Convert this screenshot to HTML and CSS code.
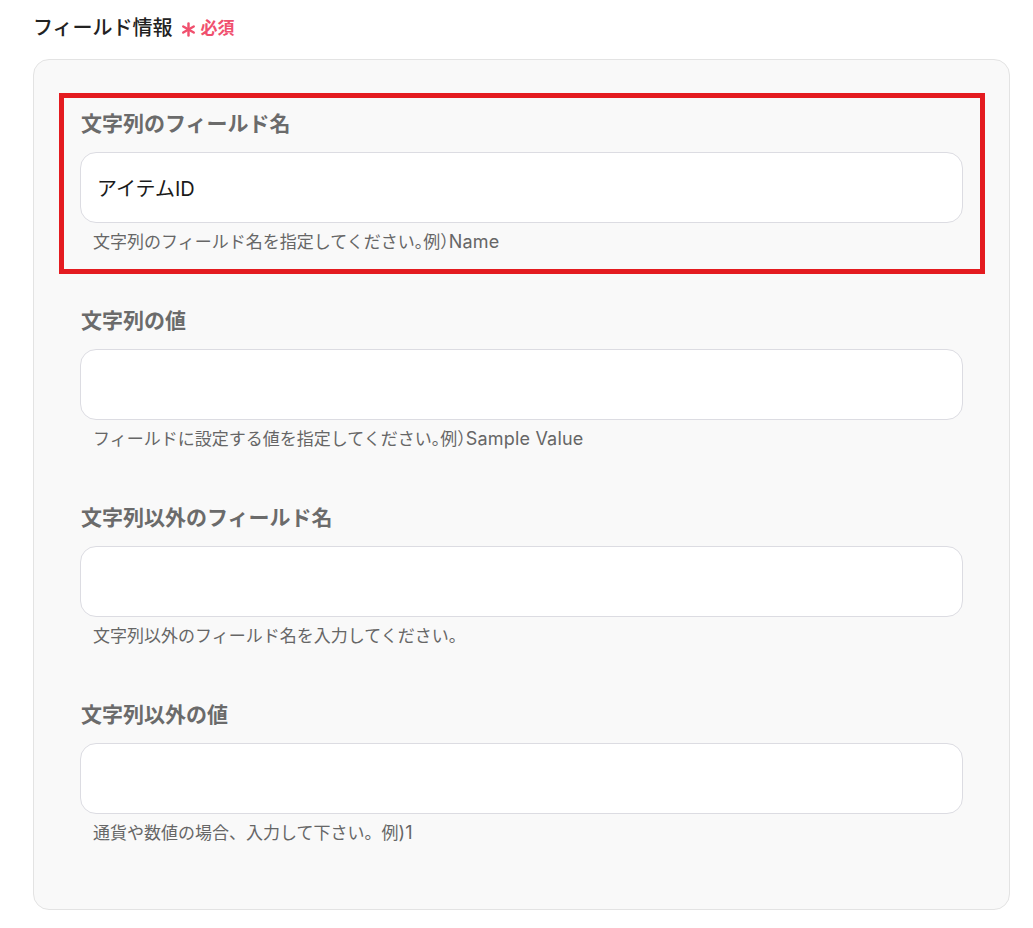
FILE: index.html
```html
<!DOCTYPE html>
<html lang="ja">
<head>
<meta charset="utf-8">
<link rel="stylesheet" href="styles.css">
</head>
<body>
<div class="page">
  <div class="title-row">
    <span class="title">フィールド情報</span>
    <svg class="req-star" viewBox="0 0 16 16" width="15" height="15" aria-hidden="true">
      <g stroke="#f0506e" stroke-width="2.6" stroke-linecap="round">
        <line x1="8" y1="1.5" x2="8" y2="14.5"/>
        <line x1="2.4" y1="4.75" x2="13.6" y2="11.25"/>
        <line x1="2.4" y1="11.25" x2="13.6" y2="4.75"/>
      </g>
    </svg>
    <span class="req">必須</span>
  </div>
  <div class="card">
    <div class="field highlight">
      <div class="label">文字列のフィールド名</div>
      <div class="input">アイテムID</div>
      <div class="hint tight">文字列のフィールド名を指定してください。例）<span class="en">Name</span></div>
    </div>
    <div class="field">
      <div class="label">文字列の値</div>
      <div class="input"></div>
      <div class="hint tight">フィールドに設定する値を指定してください。例）<span class="en">Sample Value</span></div>
    </div>
    <div class="field">
      <div class="label">文字列以外のフィールド名</div>
      <div class="input"></div>
      <div class="hint">文字列以外のフィールド名を入力してください。</div>
    </div>
    <div class="field">
      <div class="label">文字列以外の値</div>
      <div class="input"></div>
      <div class="hint">通貨や数値の場合、入力して下さい。例<span class="en">)1</span></div>
    </div>
  </div>
</div>
</body>
</html>
```

FILE: styles.css
```css
html, body {
  margin: 0;
  padding: 0;
  background: #ffffff;
}
body {
  font-family: Inter, "Noto Sans CJK JP", "Noto Sans", sans-serif;
  color: #222222;
}
.page {
  padding: 14px 23px 0 33px;
}
.title-row {
  display: flex;
  align-items: center;
  height: 28px;
  margin-bottom: 17px;
}
.title {
  font-size: 20px;
  line-height: 28px;
  font-weight: 500;
  color: #222222;
}
.req-star {
  margin-left: 8px;
  margin-top: 3px;
}
.req {
  margin-left: 5px;
  font-size: 17px;
  font-weight: 700;
  color: #f0506e;
  line-height: 28px;
}
.card {
  border: 1px solid #e3e3e3;
  border-radius: 16px;
  background: #f9f9f9;
  padding: 50px 46px 65px 46px;
  display: flex;
  flex-direction: column;
  gap: 54px;
}
.field {
  position: relative;
  display: flex;
  flex-direction: column;
}
.highlight::after {
  content: "";
  position: absolute;
  top: -17px;
  left: -21px;
  right: -22px;
  bottom: -21px;
  border: 5px solid #e41b20;
  pointer-events: none;
}
.label {
  font-size: 21px;
  line-height: 28px;
  font-weight: 700;
  color: #6b6b6b;
  padding-left: 1px;
}
.input {
  margin-top: 14px;
  height: 71px;
  box-sizing: border-box;
  border: 1px solid #dcdce2;
  border-radius: 16px;
  background: #ffffff;
  padding: 0 16px;
  display: flex;
  align-items: center;
  font-size: 20px;
  color: #1a1a1a;
}
.hint {
  margin-top: 8px;
  padding-left: 13px;
  height: 22px;
  font-size: 17px;
  line-height: 22px;
  color: #666666;
  white-space: nowrap;
}
.tight {
  font-feature-settings: "halt";
}
.en {
  font-size: 18px;
  line-height: 1;
  letter-spacing: 0.2px;
}
```
